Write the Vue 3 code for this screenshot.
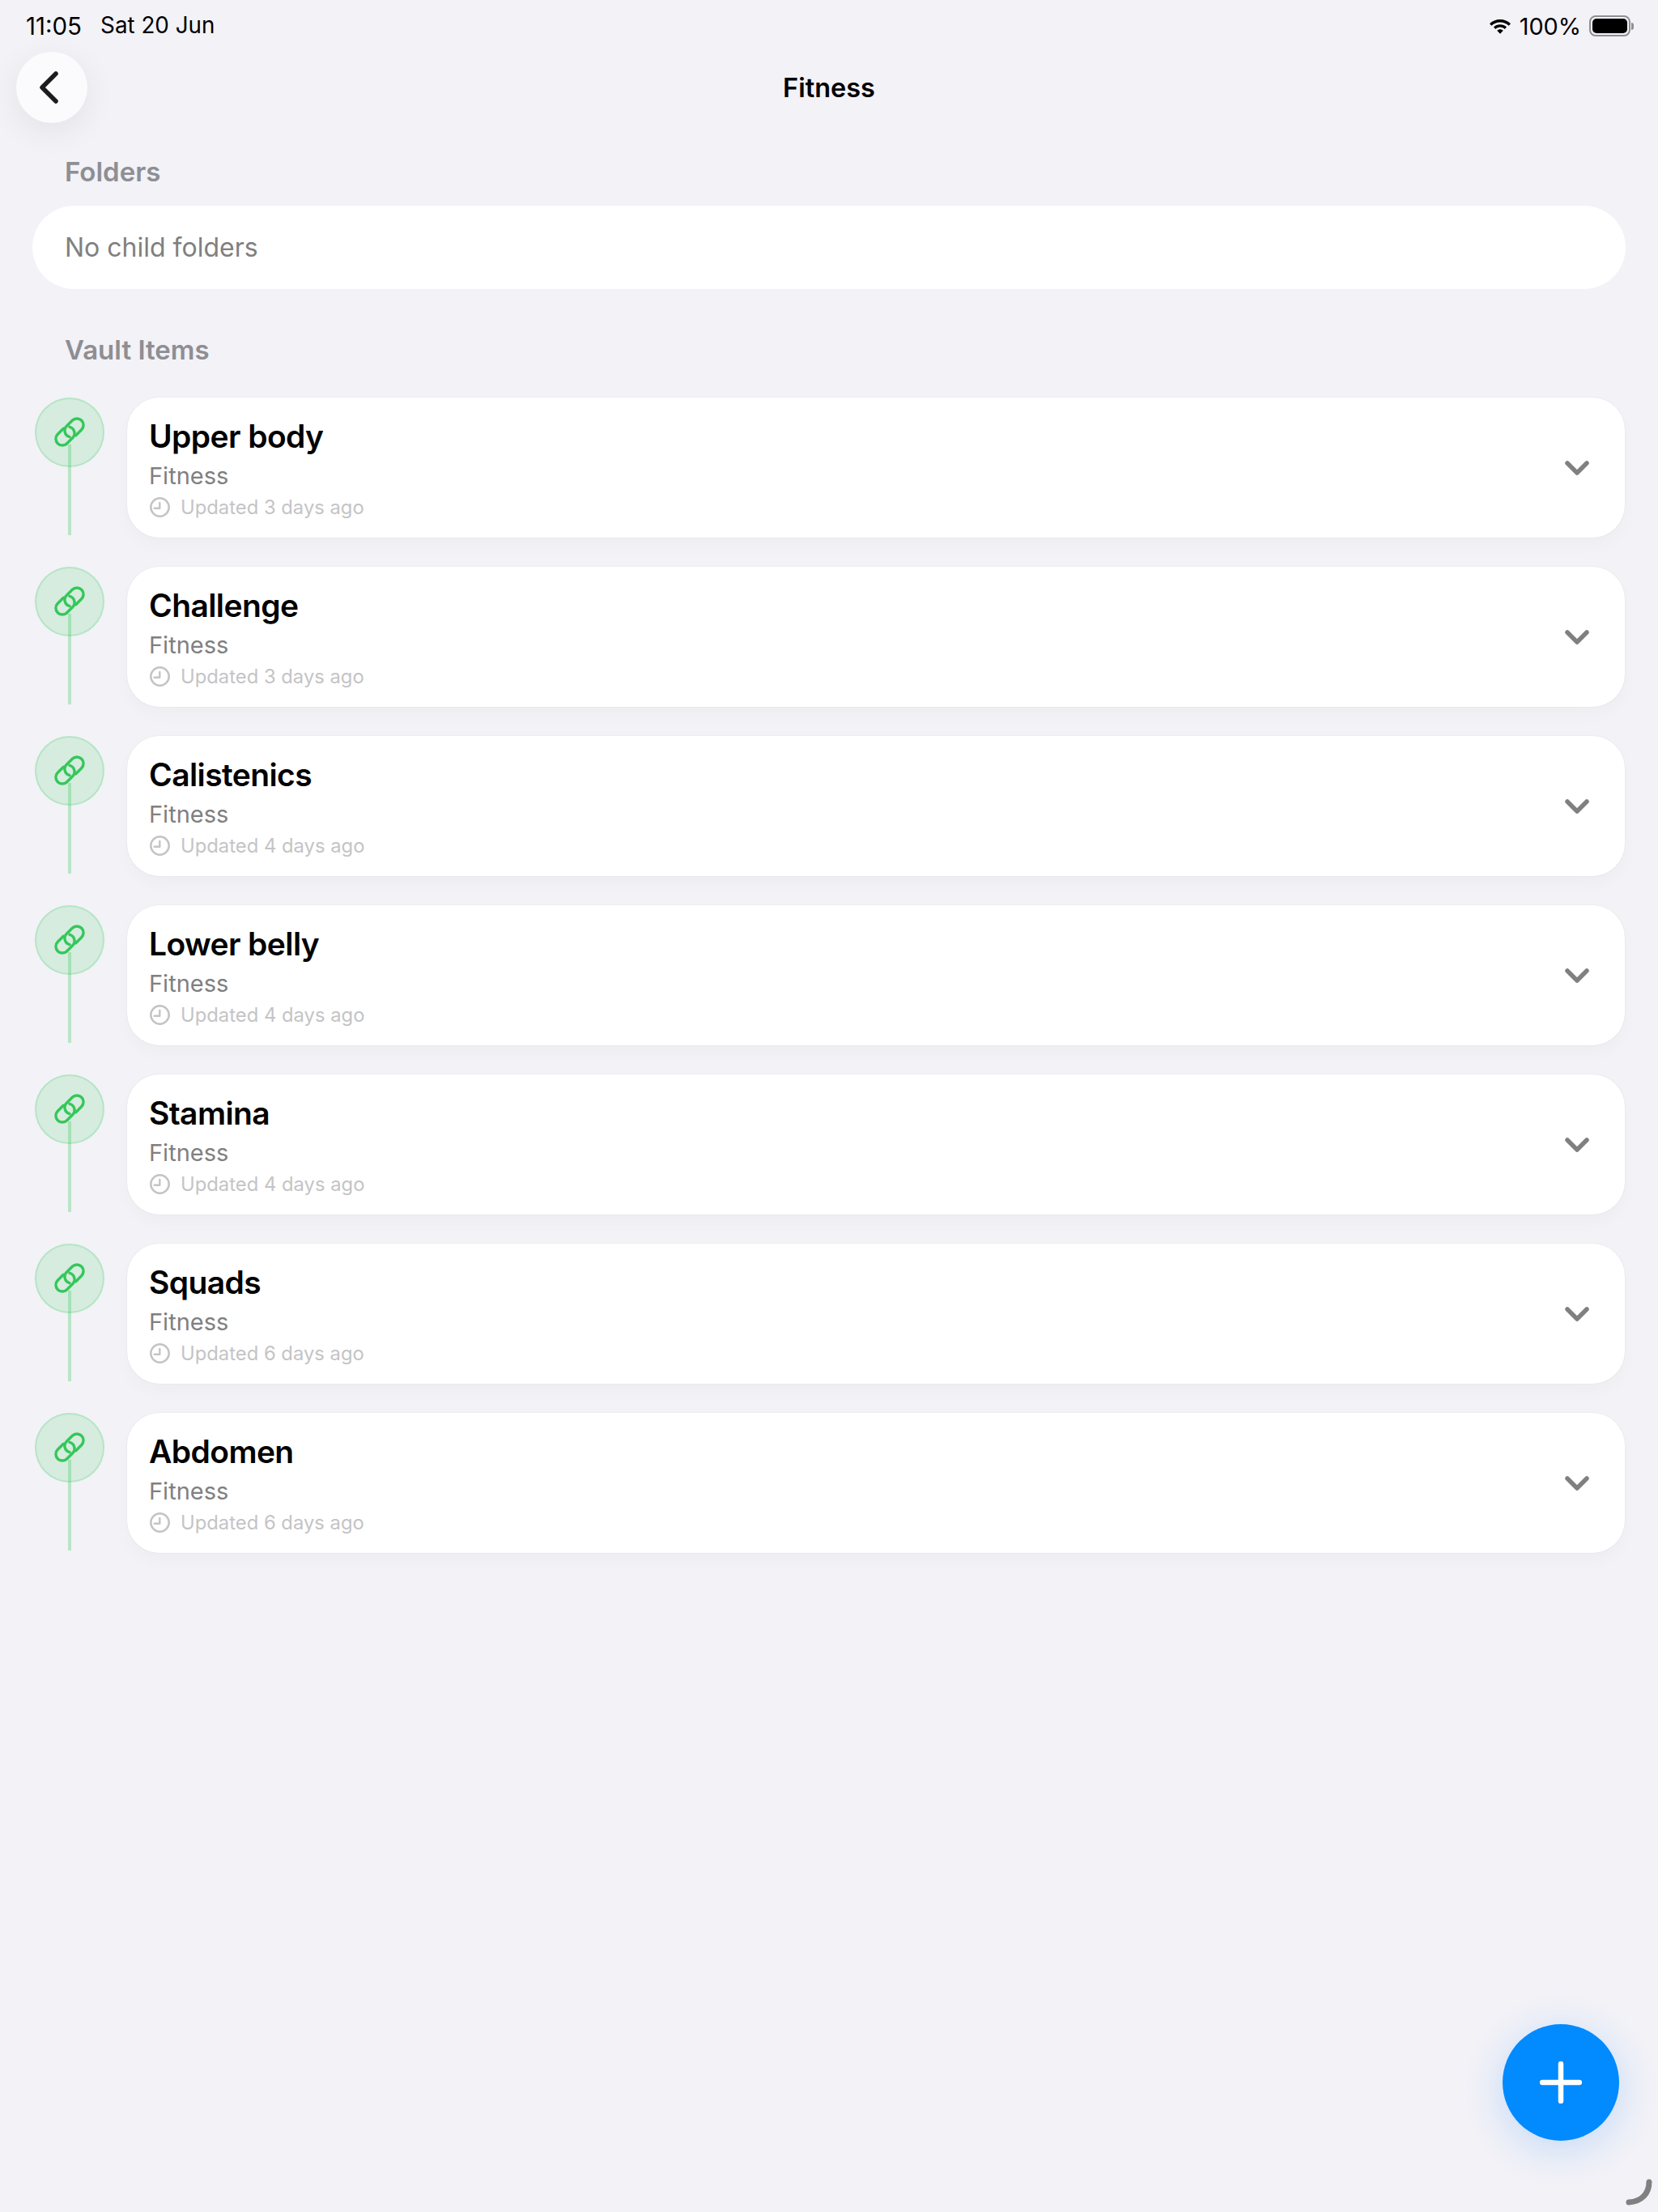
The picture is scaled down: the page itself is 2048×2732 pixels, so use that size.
<template>
  <div class="page">
    <div class="status">
      <div class="status-left"><span class="time">11:05</span><span>Sat 20 Jun</span></div>
      <div class="status-right">
        <svg class="wifi" width="30" height="22" viewBox="0 0 30 22">
          <path d="M15 3C9.800 3 5.300 5 2 8.200l2.300 2.500C7 8 10.800 6.400 15 6.400s8 1.600 10.700 4.300L28 8.200C24.700 5 20.200 3 15 3z" fill="#000"/>
          <path d="M15 9.200c-3.100 0-6 1.200-8 3.200l2.400 2.500c1.400-1.400 3.400-2.300 5.600-2.300s4.200.9 5.600 2.300l2.400-2.500c-2-2-4.900-3.200-8-3.200z" fill="#000"/>
          <path d="M15 15.300c-1.500 0-2.800.6-3.800 1.500L15 20.800l3.800-4c-1-.9-2.300-1.500-3.800-1.500z" fill="#000"/>
        </svg>
        <span>100%</span>
        <div class="battery"><div class="battery-fill"></div></div>
        <div class="battery-tip"></div>
      </div>
    </div>

    <div class="header">
      <button class="back">
        <svg width="30" height="44" viewBox="0 0 30 44">
          <path d="M24 5L7 22l17 17" fill="none" stroke="#1c1c1e" stroke-width="5.500" stroke-linecap="round" stroke-linejoin="round"/>
        </svg>
      </button>
      <div class="title">Fitness</div>
    </div>

    <div class="label folders-label">Folders</div>
    <div class="folders">No child folders</div>

    <div class="label vault-label">Vault Items</div>
    <div class="list">
      <div class="row" v-for="item in items" :key="item.name">
        <div class="rail">
          <div class="dot">
            <svg width="48" height="48" viewBox="0 0 48 48">
              <g fill="none" stroke="#34c759" stroke-width="3.400" stroke-linecap="round">
                <path d="M31.700 27.700l7-7A8 8 0 0 0 27.300 9.300l-7 7A8 8 0 0 0 24 29.700"/>
                <path d="M16.300 19.300l-7 7A8 8 0 0 0 20.700 37.700l7-7A8 8 0 0 0 24 17.300"/>
              </g>
            </svg>
          </div>
          <div class="stem"></div>
        </div>
        <div class="card">
          <div class="card-text">
            <div class="name">{{ item.name }}</div>
            <div class="folder">Fitness</div>
            <div class="updated">
              <svg width="25" height="25" viewBox="0 0 25 25">
                <circle cx="12.500" cy="12.500" r="11.200" fill="none" stroke="#c4c4c6" stroke-width="2.500"/>
                <path d="M12.300 7v6.700H5.700" fill="none" stroke="#c4c4c6" stroke-width="2.400" stroke-linecap="round" stroke-linejoin="round"/>
              </svg>
              <span>Updated {{ item.age }} days ago</span>
            </div>
          </div>
          <svg class="chev" width="30" height="20" viewBox="0 0 30 20">
            <path d="M3 4l12 12L27 4" fill="none" stroke="#808080" stroke-width="5.500" stroke-linecap="round" stroke-linejoin="round"/>
          </svg>
        </div>
      </div>
    </div>

    <button class="fab">
      <svg width="52" height="52" viewBox="0 0 52 52">
        <path d="M26 3v46M3 26h46" fill="none" stroke="#fff" stroke-width="6.500" stroke-linecap="round"/>
      </svg>
    </button>
    <svg class="corner" width="40" height="40" viewBox="0 0 40 40">
      <path d="M32 4c0 14-9 24-25 25" fill="none" stroke="#808080" stroke-width="7" stroke-linecap="round"/>
    </svg>
  </div>
</template>

<script setup>
const items = [
  { name: 'Upper body', age: 3 },
  { name: 'Challenge', age: 3 },
  { name: 'Calistenics', age: 4 },
  { name: 'Lower belly', age: 4 },
  { name: 'Stamina', age: 4 },
  { name: 'Squads', age: 6 },
  { name: 'Abdomen', age: 6 }
]
</script>

<style scoped>
.page{ position:relative; width:2048px; height:2732px; overflow:hidden; background:#f2f2f7; font-family:Inter,"Liberation Sans",sans-serif; color:#000 }
.status{ display:flex; justify-content:space-between; align-items:center; height:64px; padding:0 30px 0 32px; font-size:27.800px; box-sizing:border-box }
.status-left{ display:flex; gap:23px }
.time{ font-size:29.500px }
.status-right{ display:flex; align-items:center; font-size:28.800px }
.wifi{ margin-right:9px }
.battery{ width:51px; height:26px; box-sizing:border-box; border:2px solid #8e8e93; border-radius:8px; padding:2px; margin-left:10px }
.battery-fill{ width:100%; height:100%; background:#000; border-radius:5px }
.battery-tip{ width:3px; height:9px; background:#8e8e93; border-radius:0 3px 3px 0; margin-left:1px }
.header{ display:flex; align-items:center; justify-content:center; position:relative; height:88px }
.back{ position:absolute; left:20px; top:0; width:88px; height:88px; border:0; padding:0 8px 0 0; border-radius:50%; background:#fbfbfe; box-shadow:0 10px 40px rgba(0,0,0,.07); display:flex; align-items:center; justify-content:center }
.title{ font-size:32.500px; font-weight:600 }
.label{ padding-left:80px; font-size:33px; font-weight:600; color:#8e8e93; line-height:44px }
.folders-label{ margin-top:38px }
.folders{ margin:20px 40px 0; height:103px; border-radius:52px; background:#fff; padding-left:40px; display:flex; align-items:center; font-size:32px; color:#808080 }
.vault-label{ margin-top:53px }
.list{ display:flex; flex-direction:column; gap:36px; margin-top:37px; padding:0 41px 0 43px }
.row{ display:flex; gap:28px; height:173px }
.rail{ position:relative; width:86px }
.dot{ width:86px; height:86px; box-sizing:border-box; border:2px solid rgba(52,199,89,.2); border-radius:50%; background:rgba(52,199,89,.15); display:flex; align-items:center; justify-content:center }
.stem{ position:absolute; left:41px; top:58px; width:4px; height:112px; background:rgba(52,199,89,.3) }
.card{ flex:1; display:flex; align-items:center; justify-content:space-between; background:#fff; border-radius:40px; padding:0 44px 0 27px; box-shadow:0 0 2px rgba(0,0,0,.08),0 10px 20px rgba(0,0,0,.025) }
.name{ font-size:39px; font-weight:600; line-height:50px; letter-spacing:-.6px; margin-top:1px }
.folder{ font-size:29px; color:#808080; line-height:38px; margin-top:5px }
.updated{ display:flex; align-items:center; gap:13px; font-size:23.800px; color:#c4c4c6; line-height:32px; margin-top:4px }
.updated svg{ margin-left:1px }
.fab{ position:absolute; left:1856px; top:2500px; width:144px; height:144px; padding:0; border:0; border-radius:50%; background:#028aff; box-shadow:0 10px 50px rgba(0,122,255,.2); display:flex; align-items:center; justify-content:center }
.corner{ position:absolute; left:2005px; top:2691px }
</style>
